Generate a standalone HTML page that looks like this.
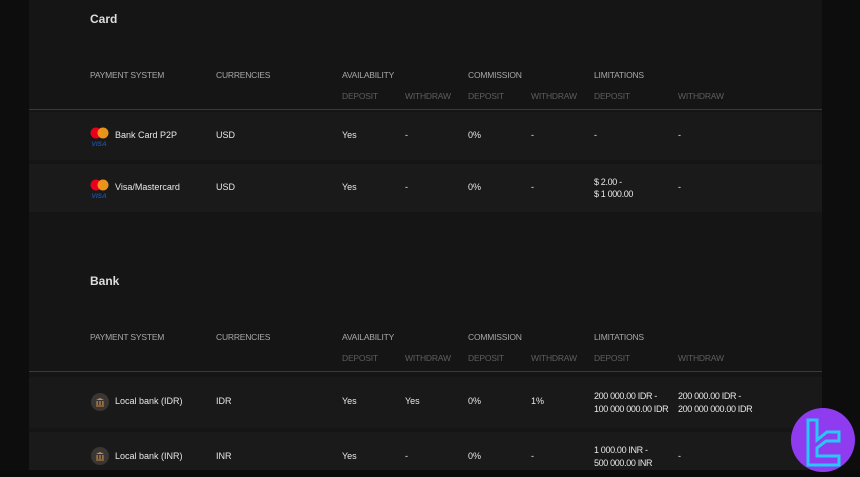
<!DOCTYPE html><html><head><style>
body{margin:0;width:860px;height:477px;background:#0d0d0d;position:relative;overflow:hidden;font-family:"Liberation Sans",sans-serif;font-size:9px;color:#e8e8e8}
.panel{position:absolute;left:29px;top:0;width:793px;height:470px;background:#151515}
.bot{position:absolute;left:0;top:470px;width:860px;height:7px;background:#0a0a0a}
.t{position:absolute;white-space:nowrap}
.h{color:#a8a8a8;font-size:8.5px;letter-spacing:-0.2px}
.s{color:#5e5e5e;font-size:8.5px;letter-spacing:-0.2px}
.title{font-size:12px;font-weight:bold;color:#ddd}
.line{position:absolute;left:29px;width:793px;height:1px;background:#3a3a3a}
.row{position:absolute;left:29px;width:793px;background:#191919}
.mc{position:absolute;width:20px;height:20px}
.bk{position:absolute;width:18px;height:18px;border-radius:50%;background:#3a3633}
.n{letter-spacing:-0.35px}
</style></head><body>
<div class="panel"></div>
<div class="bot"></div>
<div class="row" style="top:112px;height:48px"></div>
<div class="row" style="top:164px;height:48px;background:#1a1a1a"></div>
<div class="row" style="top:377px;height:51px"></div>
<div class="row" style="top:432px;height:38px;background:#1a1a1a"></div>
<div class="t title" style="left:90px;top:12px">Card</div>
<div class="t title" style="left:90px;top:274px">Bank</div>

<div class="t h" style="left:90px;top:70px">PAYMENT SYSTEM</div><div class="t h" style="left:216px;top:70px">CURRENCIES</div><div class="t h" style="left:342px;top:70px">AVAILABILITY</div><div class="t h" style="left:468px;top:70px">COMMISSION</div><div class="t h" style="left:594px;top:70px">LIMITATIONS</div>
<div class="t s" style="left:342px;top:91px">DEPOSIT</div><div class="t s" style="left:405px;top:91px">WITHDRAW</div><div class="t s" style="left:468px;top:91px">DEPOSIT</div><div class="t s" style="left:531px;top:91px">WITHDRAW</div><div class="t s" style="left:594px;top:91px">DEPOSIT</div><div class="t s" style="left:678px;top:91px">WITHDRAW</div>
<div class="line" style="top:109px"></div>

<div class="t h" style="left:90px;top:332px">PAYMENT SYSTEM</div><div class="t h" style="left:216px;top:332px">CURRENCIES</div><div class="t h" style="left:342px;top:332px">AVAILABILITY</div><div class="t h" style="left:468px;top:332px">COMMISSION</div><div class="t h" style="left:594px;top:332px">LIMITATIONS</div>
<div class="t s" style="left:342px;top:353px">DEPOSIT</div><div class="t s" style="left:405px;top:353px">WITHDRAW</div><div class="t s" style="left:468px;top:353px">DEPOSIT</div><div class="t s" style="left:531px;top:353px">WITHDRAW</div><div class="t s" style="left:594px;top:353px">DEPOSIT</div><div class="t s" style="left:678px;top:353px">WITHDRAW</div>
<div class="line" style="top:371px"></div>

<svg class="mc" style="left:90px;top:127px" viewBox="0 0 20 20"><circle cx="6" cy="6" r="5.5" fill="#eb001b"/><circle cx="13" cy="6" r="5.5" fill="#f79e1b" opacity=".92"/><text x="1.5" y="19" font-size="6.5" font-weight="bold" font-style="italic" fill="#1a4fa0" font-family="Liberation Sans">VISA</text></svg>
<div class="t" style="left:115px;top:130px">Bank Card P2P</div><div class="t" style="left:216px;top:130px">USD</div><div class="t" style="left:342px;top:130px">Yes</div><div class="t" style="left:405px;top:130px">-</div><div class="t" style="left:468px;top:130px">0%</div><div class="t" style="left:531px;top:130px">-</div><div class="t" style="left:594px;top:130px">-</div><div class="t" style="left:678px;top:130px">-</div>

<svg class="mc" style="left:90px;top:179px" viewBox="0 0 20 20"><circle cx="6" cy="6" r="5.5" fill="#eb001b"/><circle cx="13" cy="6" r="5.5" fill="#f79e1b" opacity=".92"/><text x="1.5" y="19" font-size="6.5" font-weight="bold" font-style="italic" fill="#1a4fa0" font-family="Liberation Sans">VISA</text></svg>
<div class="t" style="left:115px;top:182px">Visa/Mastercard</div><div class="t" style="left:216px;top:182px">USD</div><div class="t" style="left:342px;top:182px">Yes</div><div class="t" style="left:405px;top:182px">-</div><div class="t" style="left:468px;top:182px">0%</div><div class="t" style="left:531px;top:182px">-</div><div class="t n" style="left:594px;top:176px;line-height:12px">$ 2.00 -<br>$ 1 000.00</div><div class="t" style="left:678px;top:182px">-</div>

<div class="bk" style="left:91px;top:393px"><svg width="18" height="18" viewBox="0 0 18 18"><path d="M5 7h8l-4-2z M5.5 8h1.2v4H5.5z M8.4 8h1.2v4H8.4z M11.3 8h1.2v4h-1.2z M5 12.5h8v1H5z" fill="#c98a4a"/></svg></div>
<div class="t" style="left:115px;top:396px">Local bank (IDR)</div><div class="t" style="left:216px;top:396px">IDR</div><div class="t" style="left:342px;top:396px">Yes</div><div class="t" style="left:405px;top:396px">Yes</div><div class="t" style="left:468px;top:396px">0%</div><div class="t" style="left:531px;top:396px">1%</div><div class="t n" style="left:594px;top:390px;line-height:12.5px">200 000.00 IDR -<br>100 000 000.00 IDR</div><div class="t n" style="left:678px;top:390px;line-height:12.5px">200 000.00 IDR -<br>200 000 000.00 IDR</div>

<div class="bk" style="left:91px;top:447px"><svg width="18" height="18" viewBox="0 0 18 18"><path d="M5 7h8l-4-2z M5.5 8h1.2v4H5.5z M8.4 8h1.2v4H8.4z M11.3 8h1.2v4h-1.2z M5 12.5h8v1H5z" fill="#c98a4a"/></svg></div>
<div class="t" style="left:115px;top:451px">Local bank (INR)</div><div class="t" style="left:216px;top:451px">INR</div><div class="t" style="left:342px;top:451px">Yes</div><div class="t" style="left:405px;top:451px">-</div><div class="t" style="left:468px;top:451px">0%</div><div class="t" style="left:531px;top:451px">-</div><div class="t n" style="left:594px;top:444px;line-height:12.5px">1 000.00 INR -<br>500 000.00 INR</div><div class="t" style="left:678px;top:451px">-</div>

<svg style="position:absolute;left:791px;top:408px" width="64" height="64" viewBox="0 0 64 64"><circle cx="32" cy="32" r="32" fill="#8f3cf0"/><path d="M17 12h9v20l10-8h12v9H35l-9 7v8h22v9H17z" fill="none" stroke="#27c8f5" stroke-width="3" stroke-linejoin="miter"/></svg>
</body></html>
